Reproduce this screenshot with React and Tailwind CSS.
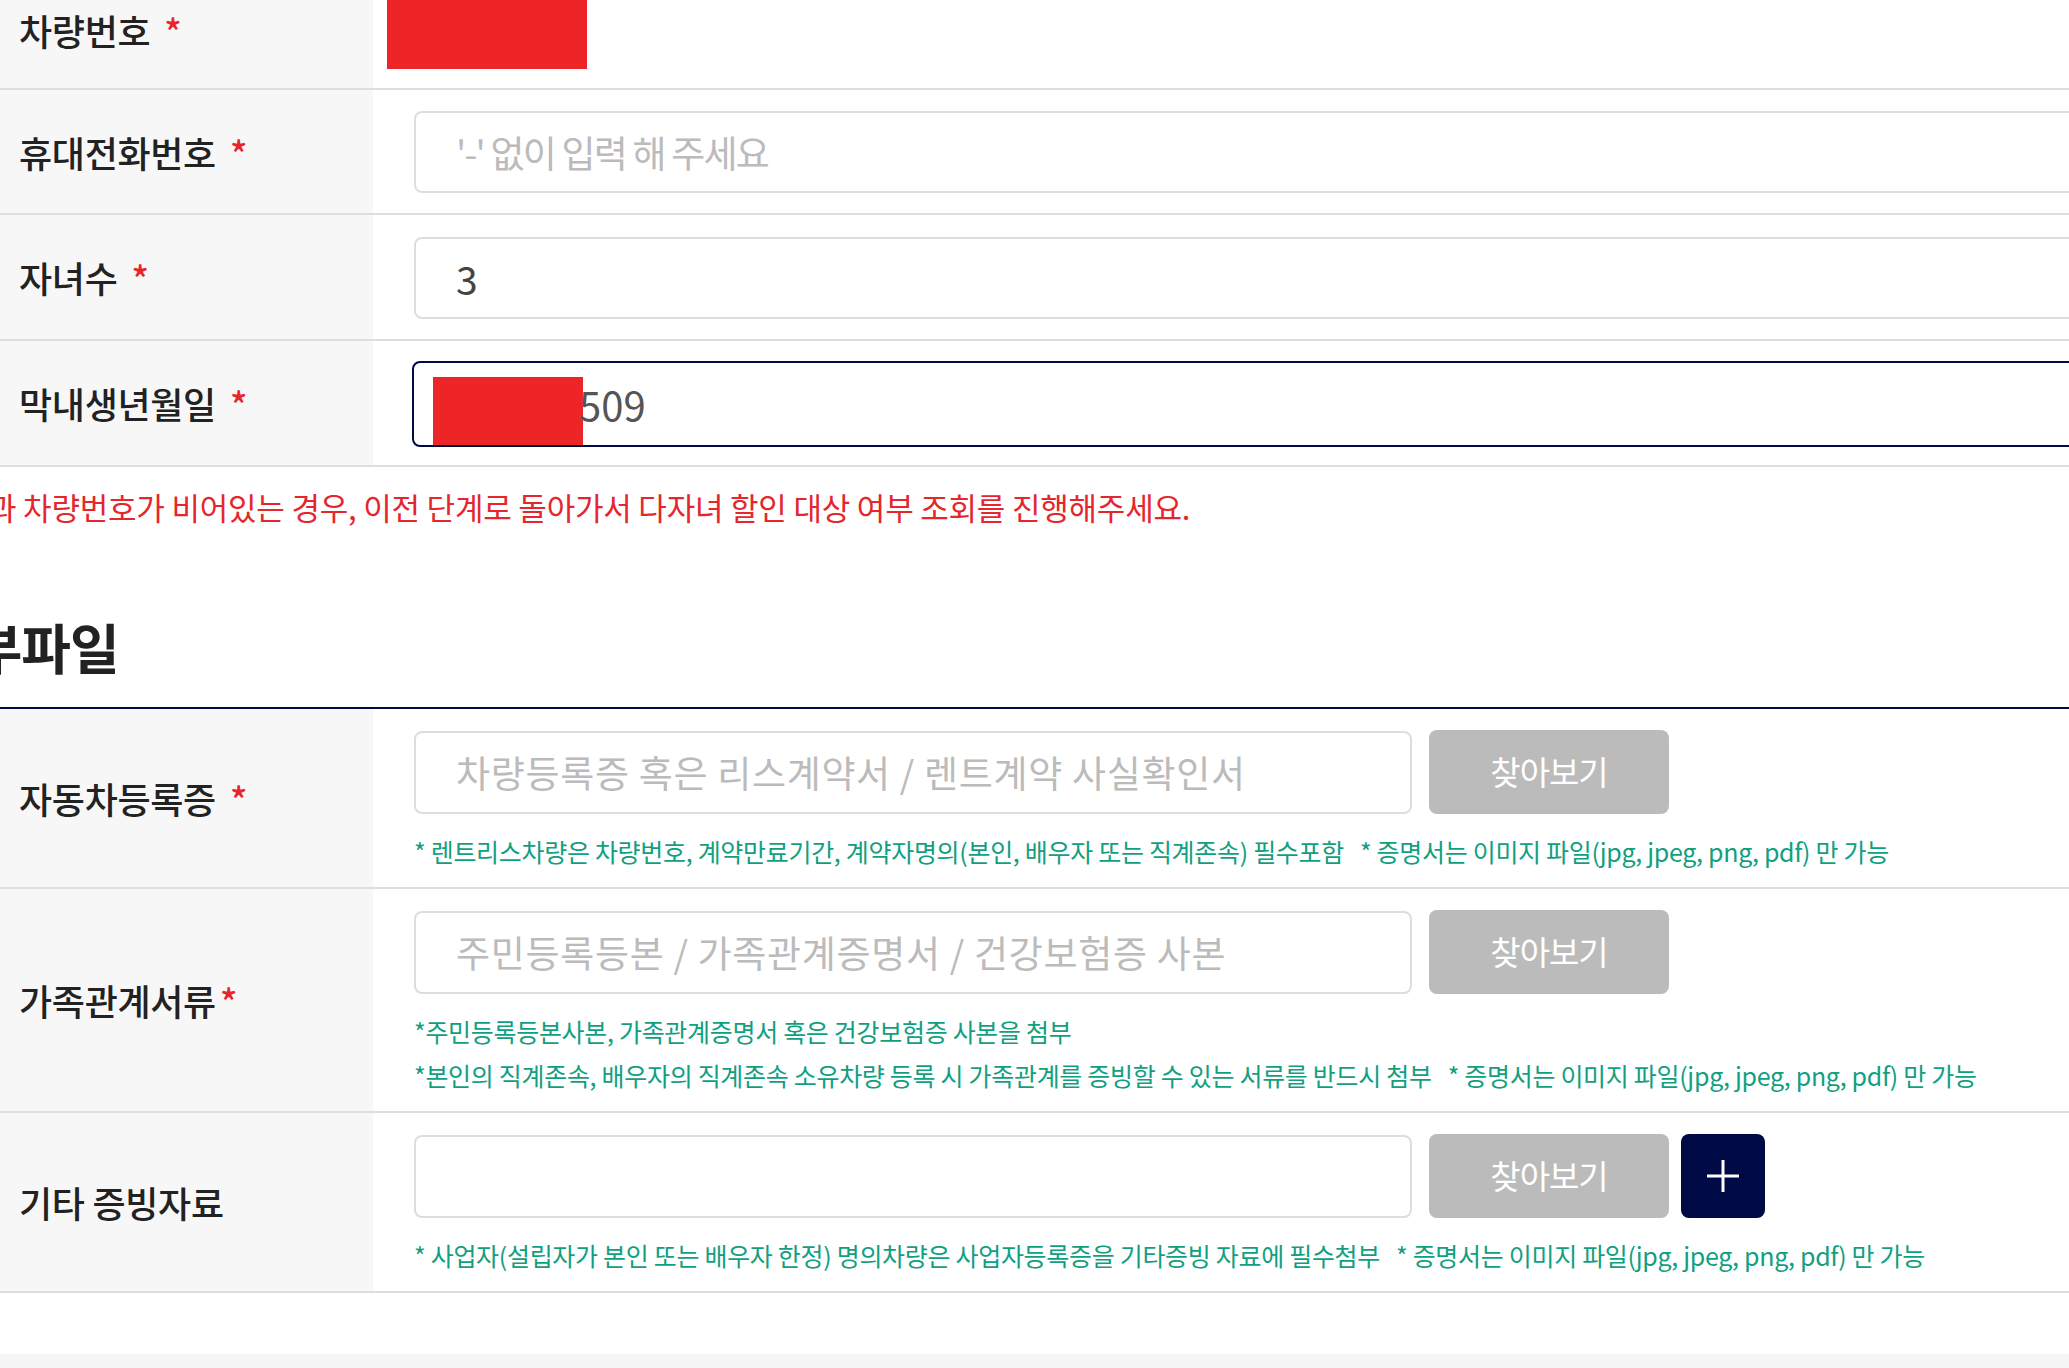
import React from 'react';

const Star = ({ gap = 'ml-[14px]' }) => (
  <span className={`${gap} text-[#e5262c]`}>*</span>
);

const Label = ({ text, star, gap }) => (
  <div className="w-[373px] shrink-0 bg-[#f7f7f7] flex items-center pl-[19px] text-[36px] tracking-[-0.3px] font-medium text-[#222]">
    <span>{text}</span>
    {star && <Star gap={gap} />}
  </div>
);

const Row = ({ children, className = '' }) => (
  <div className={`flex border-b-2 border-[#dedede] ${className}`}>{children}</div>
);

const Hint = ({ children }) => (
  <p className="text-[25px] leading-[44px] tracking-[-0.3px] text-[#11a07f] whitespace-nowrap">{children}</p>
);

const FileRow = ({ label, star, gap, placeholder, plus, hints }) => (
  <Row>
    <Label text={label} star={star} gap={gap} />
    <div className="pl-[41px] pt-[21px] pb-[14px]">
      <div className="flex items-center">
        <input
          readOnly
          placeholder={placeholder}
          className="w-[998px] h-[83px] border-2 border-[#dddddd] rounded-[8px] pl-[40px] text-[37px] tracking-[0.7px] text-[#444] placeholder:text-[#bbbbbb] outline-none"
        />
        <button className="ml-[17px] w-[240px] h-[84px] rounded-[8px] bg-[#bbbbbb] text-white text-[33px] tracking-[-1px]">
          찾아보기
        </button>
        {plus && (
          <button className="ml-[12px] w-[84px] h-[84px] rounded-[8px] bg-[#000a45] flex items-center justify-center">
            <svg width="34" height="34" viewBox="0 0 34 34" fill="none" stroke="white" strokeWidth="3">
              <line x1="17" y1="1" x2="17" y2="33" />
              <line x1="1" y1="17" x2="33" y2="17" />
            </svg>
          </button>
        )}
      </div>
      <div className="mt-[15px]">
        {hints.map((h, i) => (
          <Hint key={i}>{h}</Hint>
        ))}
      </div>
    </div>
  </Row>
);

export default function App() {
  return (
    <div className="w-full h-[1368px] overflow-hidden bg-white font-['Noto_Sans_CJK_KR',sans-serif]">
      <div className="w-[2300px] -mt-[28px]">
        <Row className="h-[118px]">
          <Label text="차량번호" star />
          <div className="flex-1">
            <div className="ml-[14px] w-[200px] h-[97px] bg-[#ee2527]" />
          </div>
        </Row>

        <Row>
          <Label text="휴대전화번호" star />
          <div className="flex-1 pl-[41px] pt-[21px] pb-[20px]">
            <input
              readOnly
              placeholder="'-' 없이 입력 해 주세요"
              className="w-full h-[82px] border-2 border-[#dddddd] rounded-[8px] pl-[40px] text-[37px] tracking-[-1.8px] text-[#444] placeholder:text-[#bbbbbb] outline-none"
            />
          </div>
        </Row>

        <Row>
          <Label text="자녀수" star />
          <div className="flex-1 pl-[41px] pt-[22px] pb-[20px]">
            <input
              readOnly
              value="3"
              className="w-full h-[82px] border-2 border-[#dddddd] rounded-[8px] pl-[40px] text-[39px] text-[#444] outline-none"
            />
          </div>
        </Row>

        <Row>
          <Label text="막내생년월일" star />
          <div className="flex-1 pl-[39px] pt-[20px] pb-[18px]">
            <div className="w-full h-[86px] border-2 border-[#000a45] rounded-[8px] pl-[19px] flex items-end">
              <div className="w-[150px] h-[68px] bg-[#ee2527]" />
              <span className="-ml-[4px] self-center text-[40px] text-[#555]">509</span>
            </div>
          </div>
        </Row>

        <p className="-ml-[12px] mt-[20px] text-[31px] leading-[40px] tracking-[-0.2px] text-[#e5262c] whitespace-nowrap">
          과 차량번호가 비어있는 경우, 이전 단계로 돌아가서 다자녀 할인 대상 여부 조회를 진행해주세요.
        </p>

        <div className="mt-[88px] border-b-2 border-[#000a45] pb-[28px]">
          <h2 className="-ml-[76px] text-[54px] leading-[64px] tracking-[-1px] font-bold text-[#222]">첨부파일</h2>
        </div>

        <FileRow
          label="자동차등록증"
          star
          placeholder="차량등록증 혹은 리스계약서 / 렌트계약 사실확인서"
          hints={[
            <>* 렌트리스차량은 차량번호, 계약만료기간, 계약자명의(본인, 배우자 또는 직계존속) 필수포함<span className="ml-[16px]">* 증명서는 이미지 파일(jpg, jpeg, png, pdf) 만 가능</span></>,
          ]}
        />

        <FileRow
          label="가족관계서류"
          star
          gap="ml-[4px]"
          placeholder="주민등록등본 / 가족관계증명서 / 건강보험증 사본"
          hints={[
            '*주민등록등본사본, 가족관계증명서 혹은 건강보험증 사본을 첨부',
            <>*본인의 직계존속, 배우자의 직계존속 소유차량 등록 시 가족관계를 증빙할 수 있는 서류를 반드시 첨부<span className="ml-[16px]">* 증명서는 이미지 파일(jpg, jpeg, png, pdf) 만 가능</span></>,
          ]}
        />

        <FileRow
          label="기타 증빙자료"
          plus
          placeholder=""
          hints={[
            <>* 사업자(설립자가 본인 또는 배우자 한정) 명의차량은 사업자등록증을 기타증빙 자료에 필수첨부<span className="ml-[16px]">* 증명서는 이미지 파일(jpg, jpeg, png, pdf) 만 가능</span></>,
          ]}
        />

        <div className="mt-[61px] h-[40px] bg-[#f5f5f5]" />
      </div>
    </div>
  );
}
